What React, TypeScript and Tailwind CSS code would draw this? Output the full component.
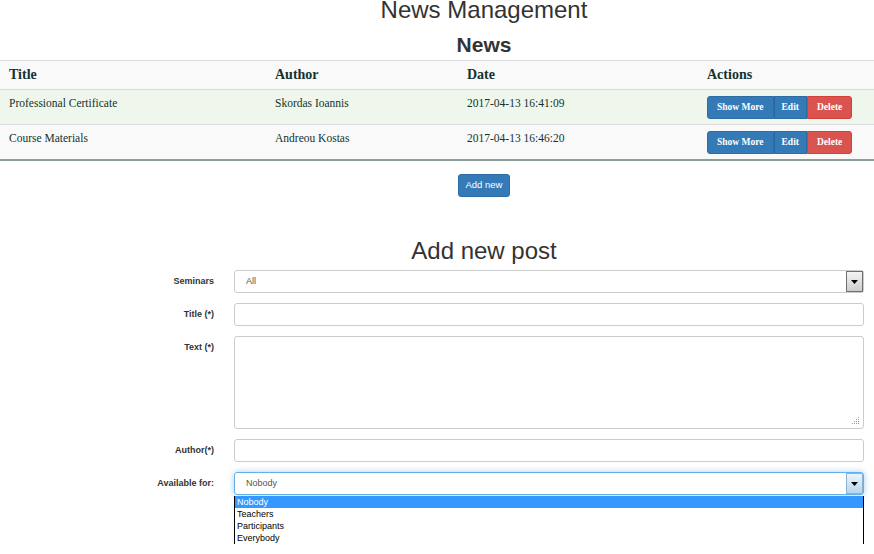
import React from 'react';

const sans = { fontFamily: '"Liberation Sans", Arial, sans-serif' };
const serif = { fontFamily: '"Liberation Serif", "Times New Roman", serif' };

const news = [
  { title: 'Professional Certificate', author: 'Skordas Ioannis', date: '2017-04-13 16:41:09', bg: 'bg-[#eff7ec]' },
  { title: 'Course Materials', author: 'Andreou Kostas', date: '2017-04-13 16:46:20', bg: 'bg-[#f9f9f9]' },
];

const audience = ['Nobody', 'Teachers', 'Participants', 'Everybody'];

function Arrow({ focused }: { focused?: boolean }) {
  return (
    <div
      className={`w-[17px] flex items-center justify-center border ${
        focused
          ? 'border-[#8db2d3] bg-gradient-to-b from-[#eaf4fc] to-[#b7d6ee]'
          : 'border-[#6f6f6f] bg-gradient-to-b from-[#f4f4f4] to-[#cdcdcd]'
      }`}
    >
      <svg width="7" height="4" viewBox="0 0 7 4">
        <path d="M0 0h7L3.5 4z" fill="#000" />
      </svg>
    </div>
  );
}

function Label({ children }: { children: React.ReactNode }) {
  return (
    <div className="w-[214px] shrink-0 text-right text-[9px] font-bold leading-[23px] text-[#333]">
      {children}
    </div>
  );
}

export default function App() {
  return (
    <div className="w-[874px] h-[554px] overflow-hidden bg-white" style={sans}>
      <h1 className="-mt-[3px] pl-[94px] text-center text-[24px] leading-[26px] text-[#333]">
        News Management
      </h1>
      <h2 className="mt-[10px] pl-[94px] text-center text-[21px] font-bold leading-[24px] text-[#333]">
        News
      </h2>

      <div className="mt-[3px] text-[#12332e]" style={serif}>
        <div className="grid grid-cols-[266px_192px_240px_1fr] h-[30px] border-y border-[#dddddd] bg-[#f9f9f9] items-center text-[14px] font-bold leading-[16px]">
          <div className="pl-[9px]">Title</div>
          <div className="pl-[9px]">Author</div>
          <div className="pl-[9px]">Date</div>
          <div className="pl-[9px]">Actions</div>
        </div>
        {news.map((n, i) => (
          <div
            key={n.title}
            className={`grid grid-cols-[266px_192px_240px_1fr] h-[35px] ${n.bg} text-[11.5px] leading-[14px] ${
              i === news.length - 1 ? 'border-b-2 border-[#8d9c98] h-[36px]' : 'border-b border-[#dddddd]'
            }`}
          >
            <div className="pl-[9px] pt-[6px]">{n.title}</div>
            <div className="pl-[9px] pt-[6px]">{n.author}</div>
            <div className="pl-[9px] pt-[6px]">{n.date}</div>
            <div className="pl-[9px] pt-[6px]">
              <div className="flex h-[23px] text-[9.5px] font-bold leading-[21px] text-white">
                <button className="px-[9px] rounded-l-[3px] border border-[#2e6da4] bg-[#337ab7]">Show More</button>
                <button className="px-[7px] border border-[#2e6da4] border-l-[#2a66a0] bg-[#337ab7]">Edit</button>
                <button className="px-[9px] rounded-r-[3px] border border-[#d43f3a] bg-[#d9534f]">Delete</button>
              </div>
            </div>
          </div>
        ))}
      </div>

      <div className="flex justify-center pl-[94px] mt-[13px]">
        <button className="w-[52px] h-[23px] rounded-[3px] border border-[#2e6da4] bg-[#337ab7] text-[9.5px] text-white">
          Add new
        </button>
      </div>

      <h3 className="mt-[41px] pl-[94px] text-center text-[24px] leading-[26px] text-[#333]">Add new post</h3>

      <div className="mt-[6px] flex flex-col gap-[10px] pr-[10px]">
        <div className="flex gap-[20px]">
          <Label>Seminars</Label>
          <div className="flex-1 h-[23px] flex border border-[#cccccc] rounded-[3px]">
            <div className="flex-1 pl-[11px] text-[9px] leading-[21px] text-[#555]">All</div>
            <Arrow />
          </div>
        </div>

        <div className="flex gap-[20px]">
          <Label>Title (*)</Label>
          <input className="flex-1 h-[23px] border border-[#cccccc] rounded-[3px] px-[11px] text-[9px] outline-none" />
        </div>

        <div className="flex gap-[20px]">
          <Label>Text (*)</Label>
          <div className="relative flex-1 h-[93px]">
            <textarea className="block w-full h-full resize-none border border-[#cccccc] rounded-[3px] px-[11px] text-[9px] outline-none" />
            <svg className="absolute right-[4px] bottom-[4px]" width="8" height="8" viewBox="0 0 8 8">
              <g fill="#9a9a9a">
                <rect x="6" y="0" width="1" height="1" />
                <rect x="4" y="2" width="1" height="1" />
                <rect x="6" y="2" width="1" height="1" />
                <rect x="2" y="4" width="1" height="1" />
                <rect x="4" y="4" width="1" height="1" />
                <rect x="6" y="4" width="1" height="1" />
                <rect x="0" y="6" width="1" height="1" />
                <rect x="2" y="6" width="1" height="1" />
                <rect x="4" y="6" width="1" height="1" />
                <rect x="6" y="6" width="1" height="1" />
              </g>
            </svg>
          </div>
        </div>

        <div className="flex gap-[20px]">
          <Label>Author(*)</Label>
          <input className="flex-1 h-[23px] border border-[#cccccc] rounded-[3px] px-[11px] text-[9px] outline-none" />
        </div>

        <div className="flex gap-[20px]">
          <Label>Available for:</Label>
          <div className="relative flex-1">
            <div className="h-[23px] flex border border-[#66afe9] rounded-[3px] shadow-[0_0_6px_rgba(102,175,233,0.6)]">
              <div className="flex-1 pl-[11px] text-[9px] leading-[21px] text-[#555]">Nobody</div>
              <Arrow focused />
            </div>
            <div className="absolute left-0 right-0 top-full mt-[1px] border-x border-black bg-white text-[9px] leading-[12px] text-black">
              {audience.map((a, i) => (
                <div key={a} className={`h-[12px] pl-[2px] ${i === 0 ? 'bg-[#3399ff] text-white' : ''}`}>
                  {a}
                </div>
              ))}
            </div>
          </div>
        </div>
      </div>
    </div>
  );
}
